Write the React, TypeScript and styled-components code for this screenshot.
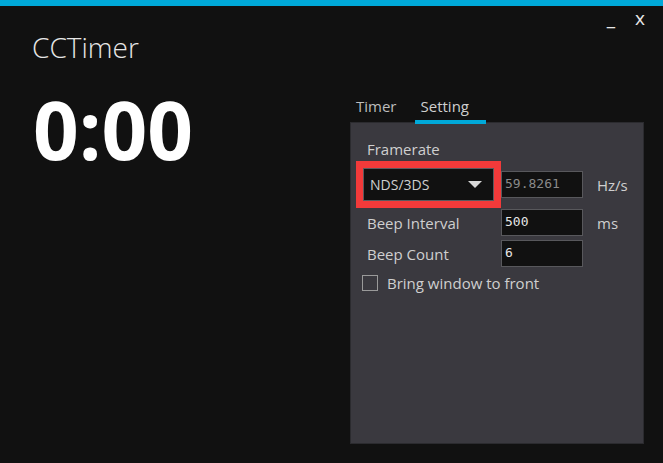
import React from 'react';
import styled, { createGlobalStyle } from 'styled-components';

const GlobalStyle = createGlobalStyle`
    html, body {
        margin: 0;
        padding: 0;
        background: #111111;
    }
    body {
        font-family: "Open Sans", "Noto Sans", sans-serif;
        color: #d0d0d0;
    }
`;

const Window = styled.div`
    width: 663px;
    height: 463px;
    display: flex;
    flex-direction: column;
    background: #111111;
    overflow: hidden;
`;

const AccentBar = styled.div`
    height: 6px;
    background: #00a9d9;
    flex-shrink: 0;
`;

const Caption = styled.div`
    height: 24px;
    display: flex;
    justify-content: flex-end;
    align-items: center;
    gap: 20px;
    padding-right: 18px;
`;

const CaptionButton = styled.span`
    font-family: "Open Sans", sans-serif;
    font-size: 19px;
    font-weight: 400;
    color: #e8e8e8;
    line-height: 1;
`;

const Main = styled.div`
    flex: 1;
    display: flex;
    flex-direction: row;
`;

const LeftColumn = styled.div`
    flex: 1;
    padding-left: 32px;
    display: flex;
    flex-direction: column;
`;

const Title = styled.div`
    font-size: 28px;
    font-weight: 300;
    color: #e6e6e6;
    line-height: 34px;
`;

const Clock = styled.div`
    font-size: 80px;
    font-weight: 700;
    color: #ffffff;
    line-height: 1;
    margin-top: 25px;
    margin-left: 1px;
`;

const RightColumn = styled.div`
    width: 294px;
    margin-right: 19px;
    margin-bottom: 19px;
    display: flex;
    flex-direction: column;
`;

const Tabs = styled.div`
    display: flex;
    margin-top: 66px;
`;

const Tab = styled.div<{ $active?: boolean }>`
    font-size: 15px;
    color: ${props => props.$active ? '#cfcfcf' : '#bdbdbd'};
    padding: 0 6px 4px;
    min-width: ${props => props.$active ? '59px' : 'auto'};
    margin-left: ${props => props.$active ? '12px' : '0'};
    border-bottom: 4px solid ${props => props.$active ? '#00a9d9' : 'transparent'};
    position: relative;
    z-index: 1;
    margin-bottom: -2px;
`;

const Panel = styled.div`
    flex: 1;
    background: #3a393f;
    border: 1px solid #2b2b2f;
    padding: 16px 0 0 16px;
    display: flex;
    flex-direction: column;
`;

const Label = styled.div`
    font-size: 15px;
    color: #cfcfcf;
`;

const FieldRow = styled.div<{ $top?: number }>`
    display: grid;
    grid-template-columns: 134px 82px auto;
    align-items: center;
    margin-top: ${props => props.$top ?? 4}px;
    height: 27px;
`;

const Select = styled.div`
    width: 131px;
    height: 33px;
    box-sizing: border-box;
    margin-left: -4px;
    background: #111111;
    border: 1px solid #5a5a5e;
    outline: 7px solid #f23a3a;
    display: flex;
    align-items: center;
    justify-content: space-between;
    padding: 0 11px 0 6px;
    font-size: 14px;
    color: #cfcfcf;
`;

const Arrow = styled.span`
    width: 0;
    height: 0;
    border-left: 7px solid transparent;
    border-right: 7px solid transparent;
    border-top: 7px solid #d8d8d8;
`;

const Input = styled.div<{ $muted?: boolean }>`
    width: 82px;
    height: 27px;
    box-sizing: border-box;
    background: #111111;
    border: 1px solid #58585c;
    font-family: "DejaVu Sans Mono", "Liberation Mono", monospace;
    font-size: 13px;
    color: ${props => props.$muted ? '#8a8a8a' : '#e6e6e6'};
    padding: 3px 3px;
    line-height: 18px;
`;

const Unit = styled.div`
    font-size: 15px;
    color: #cfcfcf;
    padding-left: 14px;
`;

const CheckRow = styled.div`
    display: flex;
    align-items: center;
    gap: 9px;
    margin-top: 6px;
    margin-left: -5px;
`;

const CheckBox = styled.span`
    width: 16px;
    height: 16px;
    box-sizing: border-box;
    border: 1px solid #9a9a9a;
`;

const App = () => {
    return (
        <Window>
            <GlobalStyle />
            <AccentBar />
            <Caption>
                <CaptionButton>_</CaptionButton>
                <CaptionButton>x</CaptionButton>
            </Caption>
            <Main>
                <LeftColumn>
                    <Title>CCTimer</Title>
                    <Clock>0:00</Clock>
                </LeftColumn>
                <RightColumn>
                    <Tabs>
                        <Tab>Timer</Tab>
                        <Tab $active>Setting</Tab>
                    </Tabs>
                    <Panel>
                        <Label>Framerate</Label>
                        <FieldRow $top={9}>
                            <Select>
                                NDS/3DS
                                <Arrow />
                            </Select>
                            <Input $muted>59.8261</Input>
                            <Unit>Hz/s</Unit>
                        </FieldRow>
                        <FieldRow $top={14}>
                            <Label>Beep Interval</Label>
                            <Input>500</Input>
                            <Unit>ms</Unit>
                        </FieldRow>
                        <FieldRow $top={4}>
                            <Label>Beep Count</Label>
                            <Input>6</Input>
                        </FieldRow>
                        <CheckRow>
                            <CheckBox />
                            <Label>Bring window to front</Label>
                        </CheckRow>
                    </Panel>
                </RightColumn>
            </Main>
        </Window>
    );
};

export default App;
